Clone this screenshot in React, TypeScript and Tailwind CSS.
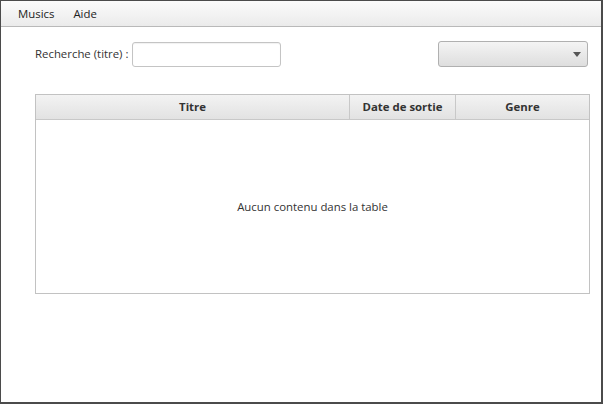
import React from 'react';

const App: React.FC = () => {
    return (
        <div
            className="w-[603px] h-[404px] flex flex-col bg-white border-t border-l border-r-2 border-b-2 border-[#4b4b4b] text-[11.4px] text-[#333333]"
            style={{ fontFamily: '"Open Sans", "Noto Sans", sans-serif' }}
        >
            {/* Barre de menu */}
            <div className="h-[26px] flex items-center gap-[19px] pl-[17px] bg-gradient-to-b from-[#fbfbfb] to-[#ebebeb] border-b border-[#b9b9b9] text-[#222]">
                <span>Musics</span>
                <span>Aide</span>
            </div>

            {/* Recherche */}
            <div className="flex items-center justify-between pl-[34px] pr-[13px] mt-[14px]">
                <div className="flex items-center gap-[4px]">
                    <span>Recherche (titre) :</span>
                    <div className="w-[149px] h-[25px] rounded-[3px] border border-[#c4c4c4] bg-white shadow-[inset_0_1px_1px_rgba(0,0,0,0.06)]" />
                </div>
                <div className="w-[150px] h-[26px] rounded-[3px] border border-[#b0b0b0] bg-gradient-to-b from-[#f4f4f4] to-[#dedede] flex items-center justify-end pr-[6px]">
                    <svg width="8" height="5" viewBox="0 0 8 5">
                        <path d="M0 0 L8 0 L4 5 Z" fill="#555" />
                    </svg>
                </div>
            </div>

            {/* Table */}
            <div className="ml-[34px] mt-[27px] w-[555px] h-[200px] border border-[#c2c2c2] flex flex-col">
                <div className="h-[25px] flex bg-gradient-to-b from-[#f3f3f3] to-[#e2e2e2] border-b border-[#c8c8c8] font-bold text-[#333]">
                    <div className="w-[314px] flex items-center justify-center border-r border-[#c8c8c8]">Titre</div>
                    <div className="w-[106px] flex items-center justify-center border-r border-[#c8c8c8]">Date de sortie</div>
                    <div className="flex-1 flex items-center justify-center">Genre</div>
                </div>
                <div className="flex-1 flex items-center justify-center text-[#333]">
                    Aucun contenu dans la table
                </div>
            </div>
        </div>
    );
};

export default App;
